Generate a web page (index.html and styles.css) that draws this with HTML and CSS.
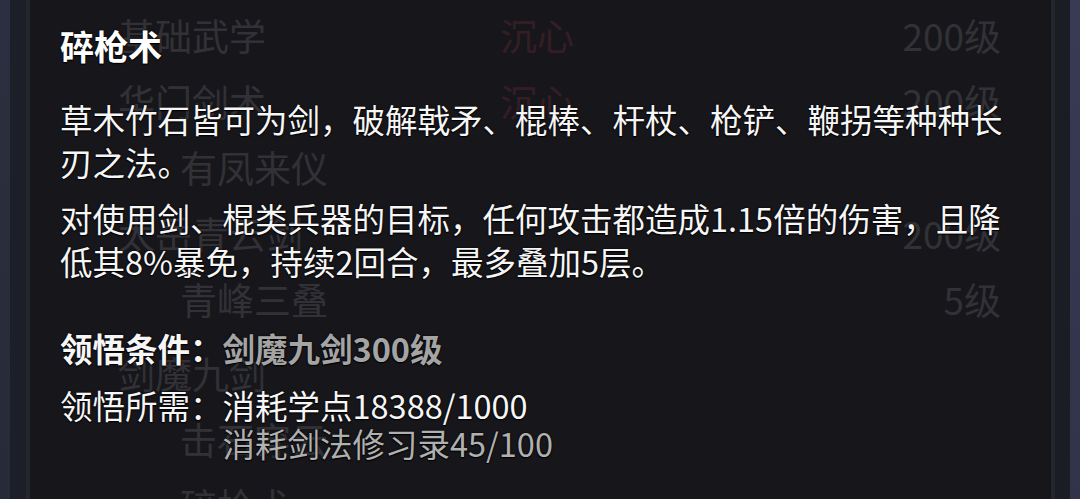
FILE: index.html
```html
<!DOCTYPE html>
<html lang="zh-CN">
<head>
<meta charset="utf-8">
<title>碎枪术</title>
<link rel="stylesheet" href="styles.css">
</head>
<body>
<div class="screen">
  <div class="rail rail-l"></div>
  <div class="gutter"></div>
  <div class="seam"></div>
  <main class="stage">
    <ul class="skill-list">
      <li class="row"><span class="name">基础武学</span><span class="tag">沉心</span><span class="lv">200级</span></li>
      <li class="row"><span class="name">华门剑术</span><span class="tag">沉心</span><span class="lv">200级</span></li>
      <li class="row sub"><span class="name">有凤来仪</span><span class="tag"></span><span class="lv"></span></li>
      <li class="row"><span class="name">太岳青云剑</span><span class="tag"></span><span class="lv">200级</span></li>
      <li class="row sub"><span class="name">青峰三叠</span><span class="tag"></span><span class="lv">5级</span></li>
      <li class="row group"><span class="name">剑魔九剑</span><span class="tag"></span><span class="lv"></span></li>
      <li class="row sub"><span class="name">击石穿云</span><span class="tag"></span><span class="lv"></span></li>
      <li class="row sub"><span class="name">碎枪术</span><span class="tag"></span><span class="lv"></span></li>
    </ul>
    <section class="tooltip">
      <h1 class="tip-title">碎枪术</h1>
      <p class="tip-desc">草木竹石皆可为剑，破解戟矛、棍棒、杆杖、枪铲、鞭拐等种种长刃之法。</p>
      <p class="tip-effect">对使用剑、棍类兵器的目标，任何攻击都造成1.15倍的伤害，且降低其8%暴免，持续2回合，最多叠加5层。</p>
      <div class="tip-cond"><span class="label">领悟条件：</span><span class="cond-val">剑魔九剑300级</span></div>
      <div class="tip-need">
        <span class="label">领悟所需：</span>
        <div class="need-list">
          <span class="need ok">消耗学点18388/1000</span>
          <span class="need lack">消耗剑法修习录45/100</span>
        </div>
      </div>
    </section>
  </main>
  <div class="seam"></div>
  <div class="gutter gutter-r"></div>
  <div class="rail rail-r"></div>
</div>
</body>
</html>
```

FILE: styles.css
```css
html, body {
  margin: 0;
  padding: 0;
  width: 1080px;
  height: 499px;
  overflow: hidden;
  background: #16171c;
  font-family: "Noto Sans CJK SC", "Noto Sans", sans-serif;
}

.screen {
  display: flex;
  width: 1080px;
  height: 499px;
}

.rail {
  width: 10px;
  flex: none;
  background: linear-gradient(#2c2f3f, #272a38);
}

.rail-r {
  background: linear-gradient(#383b53, #30334a);
}

.gutter {
  width: 16px;
  flex: none;
  background: #1d1f28;
}

.gutter-r {
  width: 15px;
  background: #1b1d25;
}

.seam {
  width: 4px;
  flex: none;
  background: #23252f;
}

.stage {
  position: relative;
  flex: 1;
  background: #16171c;
  overflow: hidden;
}

/* background list (covered by tooltip) */
.skill-list {
  list-style: none;
  margin: 0;
  padding: 2px 50px 0 88px;
}

.row {
  display: grid;
  grid-template-columns: 382px 1fr auto;
  align-items: center;
  height: 66px;
  font-size: 37px;
  color: #9a9aa0;
}

.row.sub .name {
  padding-left: 62px;
}

.row.group {
  margin-top: 8px;
}

.tag {
  color: #b03c44;
}

.lv {
  text-align: right;
}

/* tooltip overlay */
.tooltip {
  position: absolute;
  inset: 0;
  background: rgba(22, 23, 28, 0.8);
  padding: 26px 46px 0 30px;
  color: #f6f6f6;
  text-shadow: 0 0 2px #000, 0 1px 1px #000;
}

.tip-title {
  margin: 0;
  font-size: 34px;
  line-height: 40px;
  font-weight: 700;
  color: #ffffff;
}

.tip-desc,
.tip-effect {
  margin: 0;
  font-size: 32.5px;
  line-height: 43px;
  font-weight: 400;
}

.tip-desc {
  margin-top: 31px;
}

.tip-effect {
  margin-top: 13px;
}

.tip-cond {
  margin-top: 44px;
  font-size: 32.5px;
  line-height: 43px;
  font-weight: 700;
}

.cond-val {
  color: #a4a4a4;
}

.tip-need {
  display: flex;
  margin-top: 17px;
  font-size: 32.5px;
  line-height: 38px;
  font-weight: 400;
}

.need-list {
  display: flex;
  flex-direction: column;
}

.need.lack {
  color: #b0b0b0;
}
```
